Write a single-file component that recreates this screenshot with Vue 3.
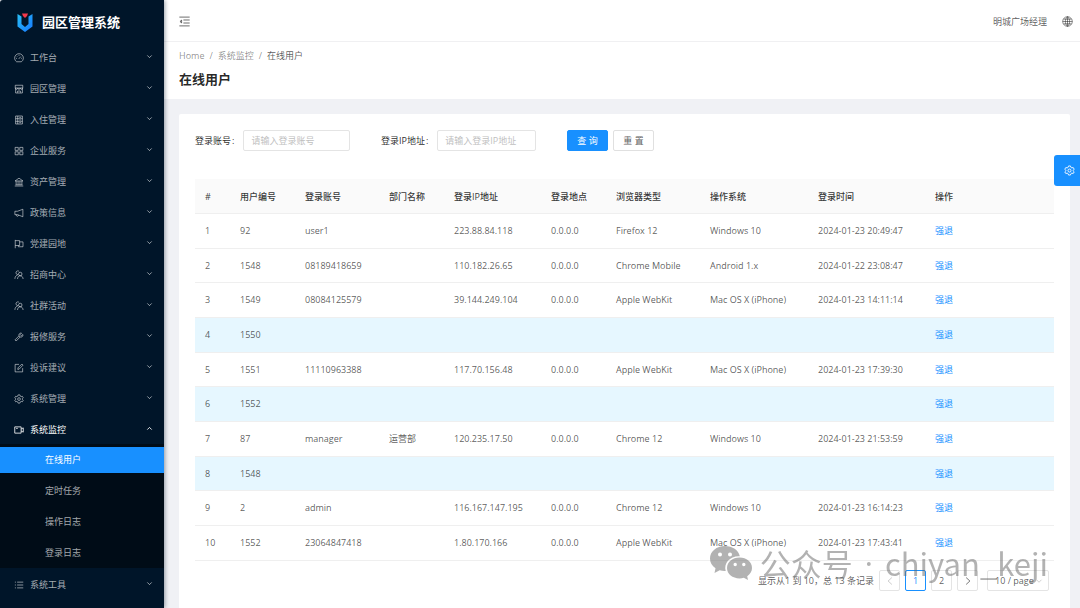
<script setup>
import { ref } from 'vue'

const icons = {
  dashboard: 'M4.2 14A7 7 0 1 1 11.8 14ZM7.6 9.4L10.8 5.8M8 3V4.4M3.2 8.6H4.6M11.6 8.6H12.8M4.7 5.2L5.5 6',
  shop: 'M2 2H14V6.4H2ZM2.6 7V14.4H13.4V7M2 6.4C2 9.2 6 9.2 6 6.6C6 9.2 10 9.2 10 6.6C10 9.2 14 9.2 14 6.4M5.8 14V11.2H10.2V14',
  profile: 'M2.6 1.6H13.4V14.4H2.6ZM2.6 5.9H13.4M2.6 10.1H13.4M6 1.6V14.4M8.4 3.8H11.4M8.4 8H11.4M8.4 12.2H11.4',
  appstore: 'M1.8 2.2H6.8V7H1.8ZM9.2 2.2H14.2V7H9.2ZM1.8 9.2H6.8V14H1.8ZM9.2 9.2H14.2V14H9.2Z',
  bank: 'M1.6 6.4L8 1.8L14.4 6.4ZM1.2 14.4H14.8M2.4 12.4H13.6M3.4 6.8V12.2M6.5 6.8V12.2M9.5 6.8V12.2M12.6 6.8V12.2',
  notice: 'M14.2 2L5.6 5.2H1.4V10.6H5.6L14.2 14ZM3.6 10.8C3.6 14 7 14 7.2 11.4',
  flag: 'M2 1.4V14.8M2 2.6H9V10.4H2M9 4.6H14.4V12.4H7V10.4',
  team: 'M6.2 7.4A3 3 0 1 1 8.2 2.2M1.4 14.2C1.6 10.6 3.4 8.6 6 7.8M10 9.2A2.8 2.8 0 1 0 10 3.6A2.8 2.8 0 0 0 10 9.2M5.6 14.4C5.8 11.2 7.4 9.3 10 9.3S14.2 11.2 14.6 14.4',
  tool: 'M1.6 12.6L8 6.2C7.2 3.4 9.4 1.2 12 1.8L9.9 4.1L11.9 6.1L14.2 4C14.8 6.6 12.6 8.8 9.8 8L3.4 14.4ZM8 6.2L9.8 8',
  form: 'M13.8 8.2V14.2H1.8V2.2H8M6 10.2L6.4 7.8L12.6 1.6L14.4 3.4L8.2 9.8Z',
  setting: 'M6.6 1.4H9.4L10 3.4L11.4 4.2L13.4 3.7L14.8 6.1L13.3 7.6V8.6L14.8 10L13.4 12.4L11.4 11.8L10 12.7L9.4 14.6H6.6L6 12.7L4.6 11.8L2.6 12.4L1.2 10L2.7 8.6V7.6L1.2 6.1L2.6 3.7L4.6 4.2L6 3.4ZM8 10.3A2.2 2.2 0 1 0 8 5.9A2.2 2.2 0 0 0 8 10.3',
  video: 'M1.2 3H11.4V13H1.2ZM11.4 6.4L14.8 4.6V11.4L11.4 9.6M3.4 5.4H6',
  list: 'M5 3.4H14.8M5 8H14.8M5 12.6H14.8M1.4 3.4H3M1.4 8H3M1.4 12.6H3',
  globe: 'M8 1A7 7 0 1 0 8 15A7 7 0 1 0 8 1ZM8 1C3.8 4.4 3.8 11.6 8 15M8 1C12.2 4.4 12.2 11.6 8 15M8 1V15M1 8H15M2.2 4.6H13.8M2.2 11.4H13.8',
  fold: 'M0.5 1.6H15.5M6.4 5.8H15.500M6.4 10.2H15.5M0.5 14.4H15.5M3.8 6L1.4 8L3.8 10Z',
  down: 'M3 5.5L8 10.5L13 5.5',
  up: 'M3 10.5L8 5.5L13 10.5',
  left: 'M11 2.5L5 8L11 13.5',
  right: 'M5 2.5L11 8L5 13.5',
}

const menu = [
  { icon: 'dashboard', label: '工作台' },
  { icon: 'shop', label: '园区管理' },
  { icon: 'profile', label: '入住管理' },
  { icon: 'appstore', label: '企业服务' },
  { icon: 'bank', label: '资产管理' },
  { icon: 'notice', label: '政策信息' },
  { icon: 'flag', label: '党建园地' },
  { icon: 'team', label: '招商中心' },
  { icon: 'team', label: '社群活动' },
  { icon: 'tool', label: '报修服务' },
  { icon: 'form', label: '投诉建议' },
  { icon: 'setting', label: '系统管理' },
  { icon: 'video', label: '系统监控', children: ['在线用户', '定时任务', '操作日志', '登录日志'] },
  { icon: 'list', label: '系统工具' },
]
const openMenu = ref('系统监控')
const current = ref('在线用户')
const toggle = (label) => { openMenu.value = openMenu.value === label ? '' : label }

const account = ref('')
const ip = ref('')
const reset = () => { account.value = ''; ip.value = '' }

const columns = [
  ['#', 'c-index'], ['用户编号', 'c-id'], ['登录账号', 'c-account'], ['部门名称', 'c-dept'], ['登录IP地址', 'c-ip'],
  ['登录地点', 'c-place'], ['浏览器类型', 'c-browser'], ['操作系统', 'c-os'], ['登录时间', 'c-time'], ['操作', 'c-action'],
]
const rows = [
  ['92', 'user1', '', '223.88.84.118', '0.0.0.0', 'Firefox 12', 'Windows 10', '2024-01-23 20:49:47'],
  ['1548', '08189418659', '', '110.182.26.65', '0.0.0.0', 'Chrome Mobile', 'Android 1.x', '2024-01-22 23:08:47'],
  ['1549', '08084125579', '', '39.144.249.104', '0.0.0.0', 'Apple WebKit', 'Mac OS X (iPhone)', '2024-01-23 14:11:14'],
  ['1550', '', '', '', '', '', '', ''],
  ['1551', '11110963388', '', '117.70.156.48', '0.0.0.0', 'Apple WebKit', 'Mac OS X (iPhone)', '2024-01-23 17:39:30'],
  ['1552', '', '', '', '', '', '', ''],
  ['87', 'manager', '运营部', '120.235.17.50', '0.0.0.0', 'Chrome 12', 'Windows 10', '2024-01-23 21:53:59'],
  ['1548', '', '', '', '', '', '', ''],
  ['2', 'admin', '', '116.167.147.195', '0.0.0.0', 'Chrome 12', 'Windows 10', '2024-01-23 16:14:23'],
  ['1552', '23064847418', '', '1.80.170.166', '0.0.0.0', 'Apple WebKit', 'Mac OS X (iPhone)', '2024-01-23 17:43:41'],
]
</script>

<template>
  <div class="layout">
    <aside class="sider">
      <div class="brand">
        <svg class="brand-mark" viewBox="0 0 16 19" aria-hidden="true">
          <defs>
            <linearGradient id="brandBlue" x1="0" y1="0" x2="1" y2="1">
              <stop offset="0" stop-color="#29c0f5" />
              <stop offset="1" stop-color="#1677ff" />
            </linearGradient>
          </defs>
          <path d="M0.500 1L4.500 3.500V11L8 14L11.500 11V3.500L15.500 1V13.500L8 19L0.500 13.500Z" fill="url(#brandBlue)" />
          <path d="M5 0.500H11L10 3L8 5L6 3Z" fill="#f5384a" />
        </svg>
        <span>园区管理系统</span>
      </div>
      <nav>
        <ul class="menu">
          <li v-for="item in menu" :key="item.label">
            <button type="button" class="menu-item" :class="{ open: openMenu === item.label }" @click="toggle(item.label)">
              <svg class="icon" viewBox="0 0 16 16" aria-hidden="true"><path :d="icons[item.icon]" /></svg>
              <span class="menu-label">{{ item.label }}</span>
              <svg class="icon caret" viewBox="0 0 16 16" aria-hidden="true"><path :d="openMenu === item.label ? icons.up : icons.down" /></svg>
            </button>
            <ul v-if="item.children && openMenu === item.label" class="submenu">
              <li v-for="child in item.children" :key="child">
                <a href="#" class="submenu-item" :class="{ selected: current === child }" @click.prevent="current = child">{{ child }}</a>
              </li>
            </ul>
          </li>
        </ul>
      </nav>
    </aside>

    <div class="main">
      <header class="topbar">
        <button type="button" class="icon-button" aria-label="收起菜单">
          <svg class="icon large" viewBox="0 0 16 16" aria-hidden="true"><path :d="icons.fold" /></svg>
        </button>
        <div class="topbar-right">
          <span>明城广场经理</span>
          <button type="button" class="icon-button" aria-label="语言">
            <svg class="icon large thin" viewBox="0 0 16 16" aria-hidden="true"><path :d="icons.globe" /></svg>
          </button>
        </div>
      </header>

      <div class="page-header">
        <nav class="breadcrumb">
          <a href="#">Home</a><span class="slash">/</span><a href="#">系统监控</a><span class="slash">/</span><span class="here">在线用户</span>
        </nav>
        <h1>在线用户</h1>
      </div>

      <main class="content">
        <section class="card">
          <form class="search" @submit.prevent>
            <div class="field">
              <label for="account">登录账号<span class="colon">:</span></label>
              <input id="account" v-model="account" type="text" placeholder="请输入登录账号">
            </div>
            <div class="field">
              <label for="ip">登录IP地址<span class="colon">:</span></label>
              <input id="ip" v-model="ip" type="text" placeholder="请输入登录IP地址">
            </div>
            <div class="actions">
              <button type="submit" class="btn primary">查 询</button>
              <button type="button" class="btn" @click="reset">重 置</button>
            </div>
          </form>

          <table>
            <thead>
              <tr>
                <th v-for="col in columns" :key="col[0]" :class="col[1]" scope="col">{{ col[0] }}</th>
              </tr>
            </thead>
            <tbody>
              <tr v-for="(row, i) in rows" :key="i" :class="{ marked: !row[1] }">
                <td>{{ i + 1 }}</td>
                <td v-for="(cell, j) in row" :key="j">{{ cell }}</td>
                <td><a href="#" @click.prevent>强退</a></td>
              </tr>
            </tbody>
          </table>

          <div class="pagination">
            <span class="total">显示从1 到 10，总 13 条记录</span>
            <button type="button" class="pager" disabled aria-label="上一页">
              <svg class="icon" viewBox="0 0 16 16" aria-hidden="true"><path :d="icons.left" /></svg>
            </button>
            <button type="button" class="pager active">1</button>
            <button type="button" class="pager">2</button>
            <button type="button" class="pager" aria-label="下一页">
              <svg class="icon" viewBox="0 0 16 16" aria-hidden="true"><path :d="icons.right" /></svg>
            </button>
            <div class="page-size">
              <select aria-label="每页条数">
                <option>10 / page</option>
                <option>20 / page</option>
                <option>50 / page</option>
              </select>
              <svg class="icon" viewBox="0 0 16 16" aria-hidden="true"><path :d="icons.down" /></svg>
            </div>
          </div>
        </section>
      </main>
    </div>

    <button type="button" class="settings" aria-label="设置">
      <svg class="icon large" viewBox="0 0 16 16" aria-hidden="true"><path :d="icons.setting" /></svg>
    </button>

    <div class="watermark">
      <svg viewBox="0 0 42 34" aria-hidden="true">
        <path fill-rule="evenodd" d="M15 0C6.500 0 0 5.500 0 12.500C0 16.500 2 20 5.500 22.300L4.500 27L9.700 24.300C11.700 24.900 13.500 25.100 15.700 25C13.500 17 20 9.700 29.800 10.200C28.500 4.200 22.500 0 15 0ZM10 6.500A2 2 0 1 1 10 10.500A2 2 0 1 1 10 6.500ZM20 6.500A2 2 0 1 1 20 10.500A2 2 0 1 1 20 6.500Z" />
        <path fill-rule="evenodd" d="M29.500 11.500C22.500 11.500 17 16 17 22C17 28 22.500 32.400 29.500 32.400C31 32.400 32.500 32.200 33.800 31.800L38 34L37.200 30.200C40.200 28.200 42 25.300 42 22C42 16 36.500 11.500 29.500 11.500ZM25.200 16.800A1.700 1.700 0 1 1 25.200 20.200A1.700 1.700 0 1 1 25.200 16.800ZM33.800 16.800A1.700 1.700 0 1 1 33.800 20.200A1.700 1.700 0 1 1 33.800 16.800Z" />
      </svg>
      <div class="watermark-text">
        <span>公众号</span>
        <span class="dot">·</span>
        <span>chiyan_keji</span>
      </div>
    </div>
  </div>
</template>

<style>
body {
  background: #f0f2f5;
}
</style>

<style scoped>
.layout {
  display: flex;
  min-height: 100vh;
  font-family: "Open Sans", "Noto Sans CJK SC", sans-serif;
  font-size: 9px;
  line-height: 14px;
  color: rgba(0, 0, 0, 0.65);
  background: #f0f1f5;
}

button,
input,
select {
  font: inherit;
  color: inherit;
  margin: 0;
}

button {
  cursor: pointer;
}

a {
  color: inherit;
  text-decoration: none;
}

ul {
  list-style: none;
  margin: 0;
  padding: 0;
}

.icon {
  display: block;
  flex: none;
  width: 10px;
  height: 10px;
  fill: none;
  stroke: currentColor;
  stroke-width: 1.3;
}

.icon.large {
  width: 11px;
  height: 11px;
}

.icon.thin {
  stroke-width: 1;
}

.sider {
  position: relative;
  z-index: 1;
  flex: none;
  width: 164px;
  background: #001529;
  border-top-left-radius: 3px;
  box-shadow: 1px 0 4px rgba(0, 21, 41, 0.4);
}

.brand {
  display: flex;
  align-items: center;
  gap: 9px;
  height: 41px;
  padding: 3px 17px 0;
  box-sizing: border-box;
  font-size: 13px;
  font-weight: 700;
  color: #fff;
}

.brand-mark {
  width: 16px;
  height: 19px;
}

.menu-item {
  display: flex;
  align-items: center;
  width: 100%;
  height: 31px;
  padding: 2px 11px 0 14px;
  border: 0;
  background: none;
  color: rgba(255, 255, 255, 0.65);
  text-align: left;
}

.menu-item.open {
  color: #fff;
}

.menu-label {
  flex: 1;
  margin-left: 6px;
}

.icon.caret {
  width: 7px;
  height: 7px;
  margin-bottom: 2px;
  stroke-width: 2;
}

.submenu {
  background: #000c17;
}

.submenu li {
  padding: 3px 0 2px;
}

.submenu-item {
  display: block;
  padding-left: 45px;
  line-height: 26px;
  color: rgba(255, 255, 255, 0.65);
}

.submenu-item.selected {
  color: #fff;
  background: #1890ff;
}

.main {
  flex: 1;
  min-width: 0;
  display: flex;
  flex-direction: column;
}

.topbar {
  display: flex;
  align-items: center;
  justify-content: space-between;
  height: 41px;
  box-sizing: border-box;
  padding: 2px 7px 0 15px;
  background: #fff;
}

.topbar-right {
  display: flex;
  align-items: center;
  gap: 15px;
}

.icon-button {
  padding: 0;
  border: 0;
  background: none;
}

.page-header {
  padding: 7px 15px 10px;
  background: #fff;
  border-top: 1px solid #f0f0f2;
}

.breadcrumb {
  display: flex;
  color: rgba(0, 0, 0, 0.45);
}

.slash {
  margin: 0 5px;
}

.here {
  color: rgba(0, 0, 0, 0.65);
}

h1 {
  margin: 7px 0 0;
  font-size: 13px;
  line-height: 19px;
  font-weight: 700;
  color: rgba(0, 0, 0, 0.85);
}

.content {
  flex: 1;
  display: flex;
  padding: 15px 10px 0 15px;
}

.card {
  flex: 1;
  min-width: 0;
  padding: 16px 16px 0;
  background: #fff;
  border-radius: 2px 2px 0 0;
}

.search {
  display: grid;
  grid-template-columns: 155px 155px auto;
  gap: 31px;
  margin-bottom: 28px;
}

.field {
  display: flex;
  align-items: center;
}

.field label {
  flex: none;
  color: rgba(0, 0, 0, 0.85);
}

.colon {
  margin: 0 9px 0 1px;
}

.field input {
  flex: 1;
  min-width: 0;
  height: 21px;
  box-sizing: border-box;
  padding: 0 7px;
  border: 1px solid #e4e4e4;
  border-radius: 2px;
  background: #fff;
}

.field input::placeholder {
  color: #bfbfbf;
}

.actions {
  display: flex;
  gap: 5px;
}

.btn {
  width: 41px;
  height: 21px;
  padding: 0;
  border: 1px solid #e0e0e0;
  border-radius: 2px;
  background: #fff;
}

.btn.primary {
  color: #fff;
  background: #1890ff;
  border-color: #1890ff;
}

table {
  width: 100%;
  table-layout: fixed;
  border-collapse: separate;
  border-spacing: 0;
}

th,
td {
  height: 35px;
  box-sizing: border-box;
  padding: 0 10px;
  border-bottom: 1px solid #efefef;
  text-align: left;
  white-space: nowrap;
}

th {
  padding-top: 2px;
  font-weight: 500;
  color: rgba(0, 0, 0, 0.8);
  background: #fafafa;
}

tbody tr:nth-child(3n + 2) td {
  height: 34px;
}

td a {
  color: #1890ff;
}

.marked td {
  background: #e6f7ff;
}

.c-index { width: 35px; }
.c-id { width: 65px; }
.c-account { width: 84px; }
.c-dept { width: 65px; }
.c-ip { width: 97px; }
.c-place { width: 65px; }
.c-browser { width: 94px; }
.c-os { width: 108px; }
.c-time { width: 117px; }
.c-action { width: 129px; }

.pagination {
  display: flex;
  align-items: center;
  justify-content: flex-end;
  gap: 5px;
  padding: 9px 5px 16px 0;
}

.pager {
  display: flex;
  align-items: center;
  justify-content: center;
  width: 21px;
  height: 21px;
  padding: 0;
  border: 1px solid #e4e4e4;
  border-radius: 2px;
  background: #fff;
}

.pager:disabled {
  color: rgba(0, 0, 0, 0.25);
  cursor: default;
}

.pager.active {
  color: #1890ff;
  border-color: #1890ff;
}

.page-size {
  position: relative;
  margin-left: 4px;
}

.page-size select {
  display: block;
  width: 62px;
  height: 21px;
  padding: 0 7px;
  border: 1px solid #e4e4e4;
  border-radius: 2px;
  background: #fff;
  appearance: none;
}

.page-size .icon {
  position: absolute;
  right: 6px;
  top: 6px;
  width: 8px;
  color: rgba(0, 0, 0, 0.3);
  pointer-events: none;
}

.settings {
  position: fixed;
  z-index: 2;
  top: 155px;
  right: 0;
  display: flex;
  align-items: center;
  justify-content: center;
  width: 26px;
  height: 31px;
  padding: 0 0 0 4px;
  border: 0;
  border-radius: 3px 0 0 3px;
  color: #fff;
  background: #1890ff;
}

.watermark {
  position: fixed;
  z-index: 3;
  right: 32px;
  bottom: 24px;
  display: flex;
  align-items: center;
  gap: 8px;
  font-family: "Noto Sans CJK SC", sans-serif;
  font-size: 31px;
  line-height: 42px;
  color: #666;
  opacity: 0.5;
  white-space: nowrap;
  pointer-events: none;
}

.watermark svg {
  width: 42px;
  height: 34px;
  fill: currentColor;
}

.watermark-text {
  display: flex;
  gap: 12px;
}

.dot {
  font-family: "Open Sans", sans-serif;
}
</style>
